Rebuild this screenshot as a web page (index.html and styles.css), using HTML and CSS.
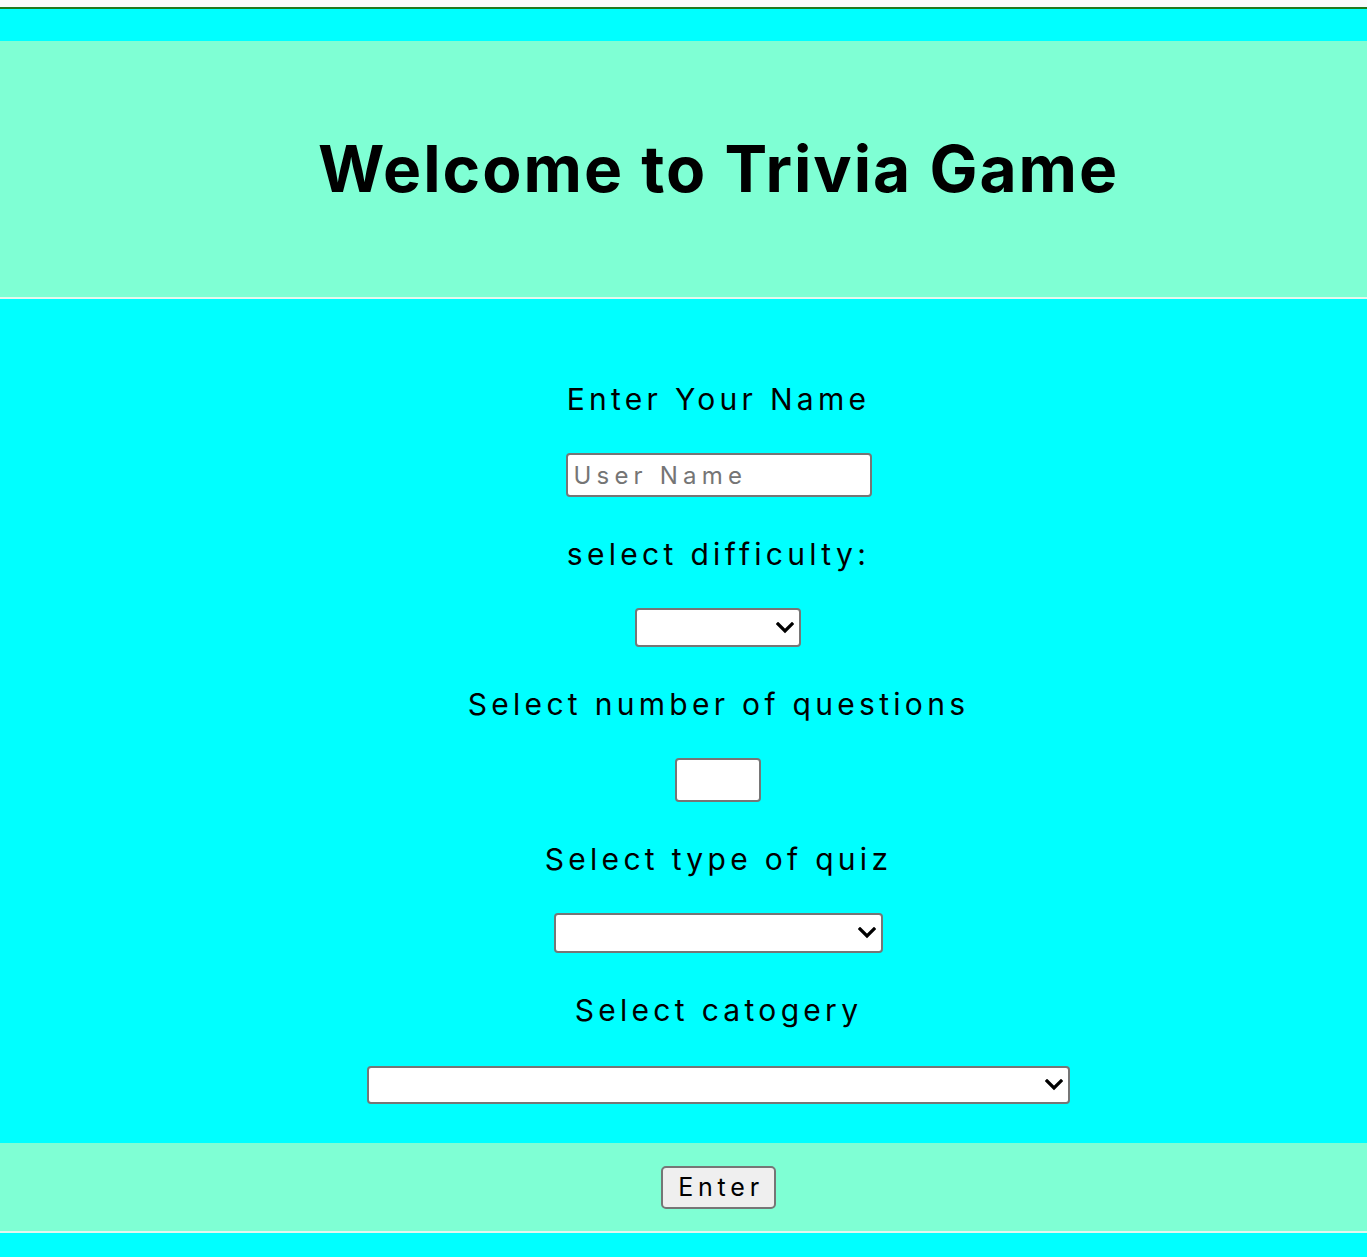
FILE: index.html
```html
<!DOCTYPE html>
<html lang="en">
<head>
<meta charset="utf-8">
<title>Trivia Game</title>
<link rel="stylesheet" href="styles.css">
</head>
<body>
<div class="topbar"></div>
<div class="page">
  <header class="hero">
    <h1 class="title">Welcome to Trivia Game</h1>
  </header>
  <main class="form">
    <div class="field">
      <label class="label" for="name">Enter Your Name</label>
      <input class="text-input" id="name" type="text" placeholder="User Name">
    </div>
    <div class="field">
      <label class="label" for="diff">select difficulty:</label>
      <span class="sel sel-diff">
        <select class="select" id="diff"><option></option></select>
        <svg class="chev" width="18" height="12" viewBox="0 0 18 12"><path d="M2 2 L9 9 L16 2" fill="none" stroke="#000" stroke-width="3.2" stroke-linecap="square"/></svg>
      </span>
    </div>
    <div class="field">
      <label class="label" for="num">Select number of questions</label>
      <input class="num-input" id="num" type="number">
    </div>
    <div class="field">
      <label class="label" for="type">Select type of quiz</label>
      <span class="sel sel-type">
        <select class="select" id="type"><option></option></select>
        <svg class="chev" width="18" height="12" viewBox="0 0 18 12"><path d="M2 2 L9 9 L16 2" fill="none" stroke="#000" stroke-width="3.2" stroke-linecap="square"/></svg>
      </span>
    </div>
    <div class="field last">
      <label class="label label-cat" for="cat">Select catogery</label>
      <span class="sel sel-cat">
        <select class="select" id="cat"><option></option></select>
        <svg class="chev" width="18" height="12" viewBox="0 0 18 12"><path d="M2 2 L9 9 L16 2" fill="none" stroke="#000" stroke-width="3.2" stroke-linecap="square"/></svg>
      </span>
    </div>
  </main>
  <footer class="footer">
    <button class="btn" type="button">Enter</button>
  </footer>
</div>
</body>
</html>
```

FILE: styles.css
```css
* { box-sizing: border-box; }

html, body {
  margin: 0;
  padding: 0;
  background: #00ffff;
}

body {
  font-family: "Inter", "Liberation Sans", sans-serif;
  color: #000;
}

.topbar {
  height: 9px;
  background: #fafafa;
  border-bottom: 2px solid #1f7a1f;
}

.page {
  padding-top: 32px;
}

.hero {
  height: 258px;
  background: #7fffd4;
  border-bottom: 2px solid #e4f7ee;
  display: flex;
  align-items: center;
  justify-content: center;
  padding-left: 70px;
}

.title {
  margin: 0;
  font-size: 64px;
  font-weight: 700;
  letter-spacing: 2px;
  line-height: 1;
}

.form {
  display: flex;
  flex-direction: column;
  align-items: center;
  padding: 82px 0 0 70px;
}

.field {
  display: flex;
  flex-direction: column;
  align-items: center;
  margin-bottom: 39px;
}

.label {
  font-size: 30px;
  line-height: 36px;
  letter-spacing: 4.3px;
  margin-bottom: 36px;
}

.label-cat {
  margin-bottom: 38px;
}

.text-input {
  width: 306px;
  height: 44px;
  border: 2px solid #767676;
  border-radius: 4px;
  background: #fff;
  padding: 0 6px;
  font-family: inherit;
  font-size: 24px;
  letter-spacing: 5.2px;
}

.text-input::placeholder {
  color: #757575;
}

.num-input {
  width: 86px;
  height: 44px;
  border: 2px solid #767676;
  border-radius: 4px;
  background: #fff;
  appearance: textfield;
  -moz-appearance: textfield;
}

.num-input::-webkit-inner-spin-button,
.num-input::-webkit-outer-spin-button {
  -webkit-appearance: none;
  margin: 0;
}

.sel {
  position: relative;
  display: inline-block;
}

.select {
  appearance: none;
  -webkit-appearance: none;
  display: block;
  height: 39px;
  border: 2px solid #767676;
  border-radius: 4px;
  background: #fff;
  margin: 0;
}

.sel-diff .select { width: 166px; }
.sel-type .select { width: 329px; height: 40px; }
.sel-cat .select { width: 703px; height: 38px; }

.chev {
  position: absolute;
  right: 7px;
  top: 50%;
  margin-top: -6px;
}

.footer {
  height: 90px;
  background: #7fffd4;
  border-bottom: 2px solid #e4f7ee;
  display: flex;
  align-items: center;
  justify-content: center;
  padding-left: 70px;
}

.btn {
  width: 115px;
  height: 43px;
  border: 2px solid #767676;
  border-radius: 5px;
  background: #efefef;
  font-family: inherit;
  font-size: 25px;
  letter-spacing: 4.8px;
  color: #000;
  padding: 0 0 0 5px;
}
```
